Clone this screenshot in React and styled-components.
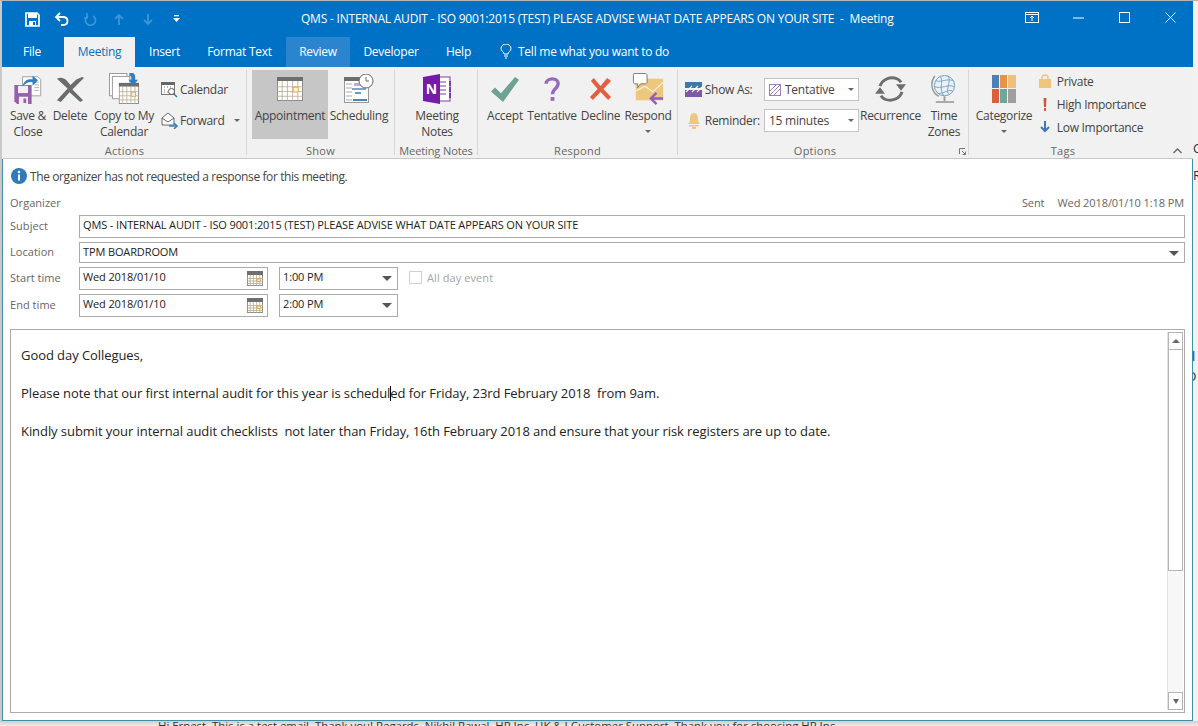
import React from 'react';
import styled, { createGlobalStyle } from 'styled-components';

const Global = createGlobalStyle`
  html, body { margin: 0; padding: 0; background: #dcdcdc; overflow: hidden; }
  body { width: 1198px; height: 726px; font-family: "Open Sans", "Noto Sans", sans-serif; }
`;

const Page = styled.div`
  width: 1198px; height: 726px; display: grid; grid-template-columns: 2px 1191px 5px; grid-template-rows: 1px 720px 5px;
  background: #e6e6e6; overflow: hidden;
`;
const TopEdge = styled.div`grid-column: 1 / 4; background: #b4b4b4;`;
const LeftEdge = styled.div`background: #c9c9c9;`;
const RightEdge = styled.div`
  background: #f2f2f2; display: flex; flex-direction: column; overflow: hidden; font-size: 13px; line-height: 16px; color: #333;
`;
const EdgeText = styled.span`margin-top: ${p => p.$mt}px; height: 16px; flex: none; text-indent: ${p => p.$indent || 0}px; white-space: nowrap;`;
const BottomEdge = styled.div`
  grid-column: 1 / 4; background: linear-gradient(#cfcfcf, #ededed); padding-left: 158px;
  font-size: 11.4px; line-height: 9px; color: #333; white-space: nowrap; overflow: hidden;
`;
const Window = styled.div`display: flex; flex-direction: column; background: #fff; min-height: 0; overflow: hidden;`;

const TitleBar = styled.div`
  height: 36px; background: #0072c6; display: flex; align-items: center; color: #fff; flex: none;
`;
const Qat = styled.div`display: flex; align-items: center; padding-left: 19px; width: 280px; flex: none;`;
const QatSlot = styled.span`width: ${p => p.$w}px; display: flex; justify-content: center; flex: none;`;
const TitleText = styled.div`font-size: 12px; white-space: pre; flex: none; width: 640px; letter-spacing: -.21px; padding-bottom: 2px;`;
const WinBtns = styled.div`display: flex; align-items: center; margin-left: auto; margin-top: -3px;`;
const WinSlot = styled.span`width: 46px; display: flex; justify-content: center; flex: none;`;

const Tabs = styled.div`height: 30px; background: #0072c6; display: flex; flex: none; align-items: stretch;`;
const Tab = styled.div`
  flex: none; box-sizing: border-box; width: ${p => p.$w}px; margin-left: ${p => p.$ml || 0}px; display: flex; align-items: center; justify-content: center; padding-bottom: 2px;
  font-size: 12px; letter-spacing: -.25px; color: ${p => p.$active ? '#106ebe' : '#fff'};
  background: ${p => p.$active ? '#f1f1f1' : p.$hover ? '#2a84cf' : 'transparent'};
`;
const TellMe = styled(Tab)`justify-content: flex-start; gap: 6px; width: 200px;`;

const Ribbon = styled.div`
  height: 92px; flex: none; background: #f1f1f1; border-bottom: 1px solid #c8c8c8; box-sizing: border-box; display: flex;
  border-left: 1px solid #f1f1f1; padding-top: 3px;
`;
const Group = styled.div`
  width: ${p => p.$w}px; flex: none; box-sizing: border-box; display: flex; flex-direction: column; position: relative;
  border-right: ${p => p.$last ? '0' : '1px solid #d6d6d6'}; margin-bottom: 3px;
`;
const GroupBody = styled.div`flex: 1; display: flex; padding-left: ${p => p.$pl || 0}px; min-height: 0;`;
const GroupLabel = styled.div`
  height: 10px; line-height: 12px; text-align: center; font-size: 11px; color: #666; white-space: nowrap; flex: none;
  letter-spacing: ${p => p.$tight ? '-.1px' : '.25px'}; padding-right: ${p => p.$pr || 0}px;
`;
const Launcher = styled.span`position: absolute; right: 2px; bottom: 0; display: flex;`;

const Big = styled.div`
  width: ${p => p.$w}px; margin-left: ${p => p.$ml || 0}px; flex: none; display: flex; flex-direction: column; align-items: center;
  height: 69px; box-sizing: border-box; background: ${p => p.$on ? '#c6c6c6' : 'transparent'};
`;
const BigIcon = styled.div`height: 38px; display: flex; align-items: center; justify-content: center; flex: none;`;
const BigLabel = styled.div`
  font-size: 12px; line-height: 16px; color: #444; text-align: center; white-space: pre; letter-spacing: -.27px;
`;
const Drop = styled.span`
  display: block; width: 0; height: 0; border: 3px solid transparent; border-top: 3px solid #666; border-bottom: 0; margin: ${p => p.$m || '6px auto 0'};
`;

const SmallCol = styled.div`display: flex; flex-direction: column; margin-left: ${p => p.$ml}px; padding-top: ${p => p.$pt}px; gap: ${p => p.$gap}px; flex: none;`;
const SmallRow = styled.div`
  display: flex; align-items: center; height: ${p => p.$h || 20}px; font-size: 12px; color: #444; white-space: nowrap; letter-spacing: -.3px;
`;
const SmallIcon = styled.span`width: ${p => p.$w}px; flex: none; display: flex; justify-content: center;`;
const OptLabel = styled.span`width: ${p => p.$w}px; flex: none;`;
const RibbonSelect = styled.div`
  width: 95px; height: 23px; box-sizing: border-box; border: 1px solid #c4c4c4; background: #fff; display: flex; align-items: center; gap: 4px;
  padding: 0 4px; font-size: 12px; color: #444; letter-spacing: -.25px; flex: none;
`;
const Caret = styled.span`margin-left: auto; width: 0; height: 0; border: 3px solid transparent; border-top: 3px solid #666; border-bottom: 0;`;
const Collapse = styled.div`flex: 1; display: flex; align-items: flex-end; justify-content: center; padding: 0 0 4px 4px;`;

const Form = styled.div`
  flex: 1; min-height: 0; display: flex; flex-direction: column; padding: 0 8px 8px 8px; background: #fff;
  box-shadow: inset 1px 0 #3f8fa8, inset -1px 0 #3f8fa8, inset 0 -1px #3f8fa8;
`;
const Info = styled.div`height: 34px; flex: none; display: flex; align-items: center; gap: 3px; font-size: 12px; color: #444; letter-spacing: -.4px; padding-left: 1px;`;
const Row = styled.div`display: flex; align-items: center; height: ${p => p.$h}px; margin-top: ${p => p.$mt || 0}px; flex: none; font-size: 11px; color: #666;`;
const FieldLabel = styled.div`width: 69px; flex: none; letter-spacing: .04px; padding-bottom: 2px;`;
const Sent = styled.div`margin-left: auto; display: flex; gap: 13px; padding: 0 1px 2px 0; letter-spacing: -.08px; white-space: nowrap;`;
const Field = styled.div`
  flex: ${p => p.$w ? 'none' : 1}; width: ${p => p.$w ? p.$w + 'px' : 'auto'}; margin-left: ${p => p.$ml || 0}px; height: 100%; box-sizing: border-box;
  border: 1px solid #ababab; background: #fff; display: flex; align-items: center; padding: 0 4px ${p => p.$pb ?? 5}px 3px; color: #222; font-size: 11px; letter-spacing: -.12px; white-space: nowrap;
`;
const Tri = styled.span`
  margin-left: auto; margin-top: 5px; width: 0; height: 0; border: 5px solid transparent; border-top: 5px solid #555; border-bottom: 0; margin-right: 1px;
`;
const Check = styled.span`width: 11px; height: 11px; border: 1px solid #d0d0d0; margin: 0 5px 2px 11px; flex: none;`;
const Disabled = styled.span`color: #a5a5a5; letter-spacing: .08px; padding-bottom: 2px;`;
const CalSlot = styled.span`margin-left: auto; display: flex; margin-top: 5px;`;

const BodyBox = styled.div`
  flex: 1; min-height: 0; margin-top: 12px; border: 1px solid #ababab; display: flex; box-sizing: border-box; width: 1175px;
`;
const BodyText = styled.div`flex: 1; padding: 16px 10px; font-size: 13px; line-height: 19px; color: #222; letter-spacing: -.067px;`;
const Para = styled.p`margin: 0 0 19px; white-space: pre;`;
const Cursor = styled.span`display: inline-block; width: 1px; height: 15px; background: #000; vertical-align: -3px; margin-right: -1px;`;
const Scrollbar = styled.div`
  width: 16px; flex: none; margin: 2px 1px 2px 0; box-sizing: border-box; display: flex; flex-direction: column; border-left: 1px solid #e2e2e2;
`;
const ScrollBtn = styled.div`height: 16px; flex: none; border: 1px solid #b5b5b5; background: #fff; display: flex; align-items: center; justify-content: center;`;
const Thumb = styled.div`height: 220px; flex: none; border: 1px solid #b5b5b5; border-top: 0; background: #fff;`;
const Track = styled.div`flex: 1; background: #f7f7f7;`;
const ArrowUp = styled.span`width: 0; height: 0; border: 4px solid transparent; border-bottom: 4px solid #666; border-top: 0;`;
const ArrowDown = styled.span`width: 0; height: 0; border: 3px solid transparent; border-top: 5px solid #666; border-bottom: 0;`;

const CalGrid = ({ w = 32, h = 28, hot = true }) => {
  const cw = w / 5, rows = 4, rh = (h - 5) / rows;
  return (
    <svg width={w} height={h} viewBox={`0 0 ${w} ${h}`}>
      <rect x=".5" y=".5" width={w - 1} height={h - 1} fill="#fff" stroke="#8c8c8c" />
      <rect x="0" y="0" width={w} height="4" fill="#6e6e6e" />
      {[1, 2, 3, 4].map(i => <line key={i} x1={i * cw} x2={i * cw} y1="4" y2={h} stroke="#b5a88f" strokeWidth=".8" />)}
      {[1, 2, 3].map(i => <line key={i} y1={5 + i * rh} y2={5 + i * rh} x1="0" x2={w} stroke="#b5a88f" strokeWidth=".8" />)}
      {hot && <rect x={3 * cw + .5} y={5 + rh + .5} width={cw} height={rh} fill="#fff4dc" stroke="#e5a94e" />}
    </svg>
  );
};

const SaveClose = () => (
  <svg width="28" height="30" viewBox="0 0 30 33">
    <path d="M9 3h17l3 3v18H9z" fill="#fff" stroke="#9a9a9a" />
    <path d="M22 9h5M22 12h5M22 15h5M22 18h5" stroke="#a7a7a7" />
    <path d="M0 12h19v21H3l-3-3z" fill="#9660ad" />
    <rect x="4" y="13" width="11" height="8" fill="#f3eef6" />
    <rect x="5" y="25" width="10" height="8" fill="#f3eef6" /><rect x="10" y="27" width="3" height="5" fill="#9660ad" />
    <path d="M9 14c1-6 5-9 11-8V2l6 5-6 6V9c-4-1-8 1-11 5z" fill="#2f7fc1" />
  </svg>
);
const DeleteIcon = () => (
  <svg width="29" height="27" viewBox="0 0 30 30" preserveAspectRatio="none">
    <path d="M1 3c4-2 7-1 10 2l4 5 6-6 6-3 2 1-12 13 11 12-3 2-11-11-9 11-4-2 11-13z" fill="#6b6b6b" />
  </svg>
);
const CopyIcon = () => (
  <svg width="31" height="32" viewBox="0 0 32 33">
    <rect x=".5" y=".5" width="18" height="23" fill="#fff" stroke="#9a9a9a" />
    <rect x="3.500" y="3.500" width="18" height="23" fill="#fff" stroke="#9a9a9a" />
    <g transform="translate(10 10)"><CalGrid w={21} h={22} /></g>
    <path d="M21 0h3c2 0 3 2 3 4v3h3l-5 6-5-6h3V4c0-1-1-1-2-1z" fill="#2f7fc1" />
  </svg>
);
const CalSmall = () => (
  <svg width="18" height="18" viewBox="0 0 18 18">
    <rect x=".5" y="2.500" width="13" height="12" fill="#fff" stroke="#777" />
    <rect y="2" width="14" height="3" fill="#666" />
    <path d="M3 7h1M6 7h1M9 7h1M3 10h1M3 12h1M6 12h1" stroke="#777" />
    <circle cx="10.500" cy="11.500" r="3" fill="#fff" stroke="#555" /><path d="M13 14l3 3" stroke="#2f7fc1" strokeWidth="1.500" />
  </svg>
);
const ForwardIcon = () => (
  <svg width="18" height="18" viewBox="0 0 18 18" fill="none">
    <path d="M1 7l6-5 6 5v7H1z" fill="#fff" stroke="#666" /><path d="M1 7l6 4 6-4" stroke="#666" />
    <path d="M8 15h7" stroke="#2f7fc1" strokeWidth="1.500" /><path d="M13 12l3 3-3 3" stroke="#2f7fc1" strokeWidth="1.500" />
  </svg>
);
const Scheduling = () => (
  <svg width="30" height="30" viewBox="0 0 30 30">
    <rect x=".5" y="3.500" width="24" height="25" fill="#fff" stroke="#999" />
    <rect y="3" width="25" height="4" fill="#6e6e6e" />
    <path d="M2 10h6M2 14h6M2 18h6M2 22h6M2 26h6" stroke="#a9a9a9" />
    <rect x="10" y="9" width="8" height="3" fill="#c9a7d9" /><rect x="8" y="14" width="14" height="2" fill="#7fa6c8" />
    <rect x="11" y="18" width="6" height="2" fill="#6d9ac0" /><rect x="9" y="25" width="14" height="2" fill="#4c86b0" />
    <circle cx="22" cy="7" r="7" fill="#fff" stroke="#666" /><path d="M22 3v4h3" fill="none" stroke="#666" />
  </svg>
);
const OneNote = () => (
  <svg width="30" height="30" viewBox="0 0 30 30">
    <rect x="13" y="3" width="15" height="24" fill="#fff" stroke="#7b3fa0" />
    <path d="M17 8h7M17 12h7M17 16h7M17 20h7" stroke="#7b3fa0" />
    <path d="M27 7h2v5h-2zM27 13h2v5h-2zM27 19h2v5h-2z" fill="#7b3fa0" />
    <path d="M1 3l17-3v30L1 27z" fill="#7719aa" />
    <text x="9.500" y="20" fill="#fff" fontSize="14" fontWeight="700" textAnchor="middle" fontFamily="Open Sans">N</text>
  </svg>
);
const Accept = () => <svg width="30" height="27" viewBox="0 0 30 28" preserveAspectRatio="none"><path d="M1 16l4-4 6 6L25 1l4 3-16 23z" fill="#6fa295" /></svg>;
const Tentative = () => (
  <svg width="17" height="25" viewBox="0 0 18 26" fill="none">
    <path d="M2 7c1-7 13-7 13 0 0 5-6 5-6 11" stroke="#9569bd" strokeWidth="3.600" /><rect x="7" y="21" width="4" height="4" fill="#9569bd" />
  </svg>
);
const Decline = () => <svg width="23" height="24" viewBox="0 0 24 24" preserveAspectRatio="none"><path d="M2 4l3-3 7 8 7-8 4 3-8 8 8 8-3 3-8-8-8 8-3-3 8-8z" fill="#e2603f" /></svg>;
const Respond = () => (
  <svg width="33" height="33" viewBox="0 0 33 35">
    <path d="M3 6h29v23H3z" fill="#edc77e" /><path d="M3 19l10-5 8 6 11-10" fill="none" stroke="#fff5df" strokeWidth="1.200" />
    <path d="M1 .5h12c1 0 2 1 2 2v7c0 1-1 2-2 2H8l-3 4v-4H2c-1 0-1.500-1-1.500-2v-7c0-1 .5-2 1-2z" fill="#fff" stroke="#777" />
    <path d="M32 27H20M25 21l-6 6 6 6" stroke="#9060b8" strokeWidth="2.500" fill="none" />
  </svg>
);
const ShowAs = () => (
  <svg width="17" height="15" viewBox="0 0 17 15">
    <rect width="17" height="6" fill="#3d78ad" /><rect y="8" width="17" height="7" fill="#7e57a8" />
    <path d="M1 10l6-6M7 10l6-6M12 10l5-5" stroke="#fff" strokeWidth="1.200" />
  </svg>
);
const Bell = () => (
  <svg width="14" height="16" viewBox="0 0 14 16"><path d="M7 0c3 0 4 3 4 6s1 4 2 5H1c1-1 2-2 2-5s1-6 4-6z" fill="#efc77c" /><rect x="2" y="12" width="10" height="1.500" fill="#efc77c" /><rect x="5" y="14" width="4" height="2" fill="#efc77c" /></svg>
);
const Hatch = () => (
  <svg width="12" height="12" viewBox="0 0 12 12"><rect x=".5" y=".5" width="11" height="11" fill="#fff" stroke="#9a80bd" /><path d="M1 7l6-6M1 11l10-10M5 11l6-6" stroke="#9a80bd" /></svg>
);
const Recurrence = () => (
  <svg width="32" height="28" viewBox="0 0 32 30" preserveAspectRatio="none" fill="none">
    <path d="M5 12C7 5 15 1 22 4c2 1 3 2 4 4" stroke="#6e6e6e" strokeWidth="3" />
    <path d="M27 18c-2 7-10 11-17 8-2-1-3-2-4-4" stroke="#6e6e6e" strokeWidth="3" />
    <path d="M21 10h10l-5 7z" fill="#6e6e6e" /><path d="M0 20h10l-5-7z" fill="#6e6e6e" />
  </svg>
);
const Globe = () => (
  <svg width="27" height="32" viewBox="0 0 28 33" fill="none">
    <circle cx="14" cy="13" r="10.500" fill="#eaf2f8" stroke="#6f9cbc" />
    <path d="M5 8c6 2 12-3 18 0M4 14c6 3 14-3 20 0M7 21c5 1 10-4 15-3M10 4c3 6-2 12 3 19M18 3c3 7-3 13 0 19" stroke="#7aa5c2" />
    <path d="M4 3C-1 9 0 20 8 24" stroke="#9a9a9a" strokeWidth="1.500" />
    <path d="M14 24v5" stroke="#9a9a9a" strokeWidth="2" /><rect x="5" y="29" width="19" height="2" fill="#a9a9a9" />
  </svg>
);
const Categorize = () => (
  <svg width="24" height="28" viewBox="0 0 24 28">
    <rect width="7" height="13" fill="#4d82b8" /><rect x="8" width="7" height="13" fill="#e8934a" /><rect x="16" width="8" height="13" fill="#efc07a" />
    <rect y="14" width="7" height="14" fill="#dc5f3b" /><rect x="8" y="14" width="7" height="14" fill="#72a699" /><rect x="16" y="14" width="8" height="14" fill="#9f9f9f" />
  </svg>
);
const Lock = () => (
  <svg width="12" height="14" viewBox="0 0 12 14"><path d="M3 6V4c0-4 6-4 6 0v2" fill="none" stroke="#efc77c" strokeWidth="1.500" /><rect y="5" width="12" height="9" fill="#efc77c" /></svg>
);
const Bang = () => <svg width="4" height="13" viewBox="0 0 4 13"><path d="M.5 0h3L3 9H1z" fill="#d9533c" /><rect x="1" y="10" width="2" height="3" fill="#d9533c" /></svg>;
const Down = () => <svg width="10" height="12" viewBox="0 0 10 12" fill="none"><path d="M5 0v10M1 6l4 4 4-4" stroke="#3f78b5" strokeWidth="2" /></svg>;
const InfoIcon = () => (
  <svg width="16" height="16" viewBox="0 0 16 16"><circle cx="8" cy="8" r="8" fill="#2f7ab8" /><circle cx="8" cy="4" r="1.300" fill="#fff" /><rect x="7" y="6.500" width="2" height="6" fill="#fff" /></svg>
);

const FloppyW = () => (
  <svg width="15" height="15" viewBox="0 0 15 15" fill="none">
    <path d="M1 1h11l2 2v11H1z" stroke="#fff" strokeWidth="1.700" /><rect x="3" y="1" width="9" height="5" fill="#fff" /><rect x="4" y="9" width="7" height="5" fill="#fff" /><rect x="8" y="10" width="2" height="3" fill="#0072c6" />
  </svg>
);
const UndoW = () => <svg width="15" height="14" viewBox="0 0 15 14" fill="none"><path d="M6 1L2 5l4 4" stroke="#fff" strokeWidth="1.800" /><path d="M3 5h6c6 0 6 8 0 8H7" stroke="#fff" strokeWidth="1.800" /></svg>;
const RedoDim = () => <svg width="13" height="13" viewBox="0 0 13 13" fill="none"><path d="M4 3a5 5 0 1 0 5 0" stroke="#3d95d6" strokeWidth="1.700" /><path d="M3 0v5h-3" stroke="#3d95d6" strokeWidth="1.500" /></svg>;
const UpDim = ({ down }) => (
  <svg width="10" height="11" viewBox="0 0 10 11" fill="none"><path d={down ? 'M5 0v9M1 6l4 4 4-4' : 'M5 11V2M1 5l4-4 4 4'} stroke="#3d95d6" strokeWidth="1.800" /></svg>
);
const QatMore = () => <svg width="7" height="8" viewBox="0 0 7 8"><rect x="1" width="5" height="1.300" fill="#fff" /><path d="M0 3h7L3.500 7z" fill="#fff" /></svg>;
const Bulb = () => <svg width="12" height="15" viewBox="0 0 12 15" fill="none"><path d="M4 10c0-2-3-3-3-5.500a5 4.500 0 0 1 10 0C11 7 8 8 8 10z" stroke="#fff" /><path d="M4 12h4M5 14h2" stroke="#fff" /></svg>;
const WinRestoreRibbon = () => <svg width="14" height="11" viewBox="0 0 14 11" fill="none"><rect x=".5" y=".5" width="13" height="10" stroke="#fff" /><path d="M0 2.500h14M7 9V4M5 6l2-2 2 2" stroke="#fff" /></svg>;
const WinMin = () => <svg width="11" height="2" viewBox="0 0 11 2"><path d="M0 1h11" stroke="#fff" /></svg>;
const WinMax = () => <svg width="11" height="11" viewBox="0 0 11 11"><rect x=".5" y=".5" width="10" height="10" fill="none" stroke="#fff" /></svg>;
const WinClose = () => <svg width="11" height="11" viewBox="0 0 11 11"><path d="M.5.5l10 10M10.500.5l-10 10" stroke="#fff" /></svg>;
const LauncherIcon = () => <svg width="7" height="7" viewBox="0 0 7 7" fill="none"><path d="M.5 6V.5H6" stroke="#777" /><path d="M3 3l3.500 3.500M6.500 3.500v3h-3" stroke="#777" /></svg>;
const Chevron = () => <svg width="9" height="6" viewBox="0 0 9 6" fill="none"><path d="M.5 5l4-4 4 4" stroke="#666" strokeWidth="1.300" /></svg>;

export default function App() {
  return (
    <Page>
      <Global />
      <TopEdge />
      <LeftEdge />
      <Window>
        <TitleBar>
          <Qat>
            <QatSlot $w={22}><FloppyW /></QatSlot>
            <QatSlot $w={36}><UndoW /></QatSlot>
            <QatSlot $w={22}><RedoDim /></QatSlot>
            <QatSlot $w={36}><UpDim /></QatSlot>
            <QatSlot $w={22}><UpDim down /></QatSlot>
            <QatSlot $w={35}><QatMore /></QatSlot>
          </Qat>
          <TitleText>QMS - INTERNAL AUDIT - ISO 9001:2015 (TEST) PLEASE ADVISE WHAT DATE APPEARS ON YOUR SITE  -  Meeting</TitleText>
          <WinBtns>
            <WinSlot><WinRestoreRibbon /></WinSlot>
            <WinSlot><WinMin /></WinSlot>
            <WinSlot><WinMax /></WinSlot>
            <WinSlot><WinClose /></WinSlot>
          </WinBtns>
        </TitleBar>
        <Tabs>
          <Tab $w={60}>File</Tab>
          <Tab $w={71} $ml={2} $active>Meeting</Tab>
          <Tab $w={59}>Insert</Tab>
          <Tab $w={91}>Format Text</Tab>
          <Tab $w={64} $ml={1} $hover>Review</Tab>
          <Tab $w={82}>Developer</Tab>
          <Tab $w={51} $ml={1}>Help</Tab>
          <TellMe $ml={16}><Bulb />Tell me what you want to do</TellMe>
        </Tabs>
        <Ribbon>
          <Group $w={244}>
            <GroupBody $pl={5}>
              <Big $w={40}><BigIcon><SaveClose /></BigIcon><BigLabel>{'Save &\nClose'}</BigLabel></Big>
              <Big $w={36} $ml={4}><BigIcon><DeleteIcon /></BigIcon><BigLabel>Delete</BigLabel></Big>
              <Big $w={64} $ml={4}><BigIcon><CopyIcon /></BigIcon><BigLabel>{'Copy to My\nCalendar'}</BigLabel></Big>
              <SmallCol $ml={4} $pt={9} $gap={11}>
                <SmallRow><SmallIcon $w={20}><CalSmall /></SmallIcon>Calendar</SmallRow>
                <SmallRow><SmallIcon $w={20}><ForwardIcon /></SmallIcon>Forward<Drop $m="0 0 0 10px" /></SmallRow>
              </SmallCol>
            </GroupBody>
            <GroupLabel>Actions</GroupLabel>
          </Group>
          <Group $w={148}>
            <GroupBody $pl={5}>
              <Big $w={76} $on><BigIcon><CalGrid w={26} h={24} /></BigIcon><BigLabel>Appointment</BigLabel></Big>
              <Big $w={62}><BigIcon><Scheduling /></BigIcon><BigLabel>Scheduling</BigLabel></Big>
            </GroupBody>
            <GroupLabel>Show</GroupLabel>
          </Group>
          <Group $w={83}>
            <GroupBody $pl={4}>
              <Big $w={76}><BigIcon><OneNote /></BigIcon><BigLabel>{'Meeting\nNotes'}</BigLabel></Big>
            </GroupBody>
            <GroupLabel $tight>Meeting Notes</GroupLabel>
          </Group>
          <Group $w={200}>
            <GroupBody $pl={6}>
              <Big $w={42}><BigIcon><Accept /></BigIcon><BigLabel>Accept</BigLabel></Big>
              <Big $w={52}><BigIcon><Tentative /></BigIcon><BigLabel>Tentative</BigLabel></Big>
              <Big $w={45}><BigIcon><Decline /></BigIcon><BigLabel>Decline</BigLabel></Big>
              <Big $w={50}><BigIcon><Respond /></BigIcon><BigLabel>Respond</BigLabel><Drop /></Big>
            </GroupBody>
            <GroupLabel>Respond</GroupLabel>
          </Group>
          <Group $w={291}>
            <GroupBody $pl={7}>
              <SmallCol $ml={0} $pt={8} $gap={8}>
                <SmallRow $h={23}><SmallIcon $w={17}><ShowAs /></SmallIcon><OptLabel $w={62}>&nbsp;Show As:</OptLabel><RibbonSelect><Hatch />Tentative<Caret /></RibbonSelect></SmallRow>
                <SmallRow $h={23}><SmallIcon $w={17}><Bell /></SmallIcon><OptLabel $w={62}>&nbsp;Reminder:</OptLabel><RibbonSelect>15 minutes<Caret /></RibbonSelect></SmallRow>
              </SmallCol>
              <Big $w={61} $ml={1}><BigIcon><Recurrence /></BigIcon><BigLabel>Recurrence</BigLabel></Big>
              <Big $w={46}><BigIcon><Globe /></BigIcon><BigLabel>{'Time\nZones'}</BigLabel></Big>
            </GroupBody>
            <GroupLabel $pr={16}>Options</GroupLabel>
            <Launcher><LauncherIcon /></Launcher>
          </Group>
          <Group $w={188} $last>
            <GroupBody $pl={6}>
              <Big $w={58}><BigIcon><Categorize /></BigIcon><BigLabel>Categorize</BigLabel><Drop /></Big>
              <SmallCol $ml={2} $pt={1} $gap={3}>
                <SmallRow><SmallIcon $w={19}><Lock /></SmallIcon>&nbsp;Private</SmallRow>
                <SmallRow><SmallIcon $w={19}><Bang /></SmallIcon>&nbsp;High Importance</SmallRow>
                <SmallRow><SmallIcon $w={19}><Down /></SmallIcon>&nbsp;Low Importance</SmallRow>
              </SmallCol>
            </GroupBody>
            <GroupLabel>Tags</GroupLabel>
          </Group>
          <Collapse><Chevron /></Collapse>
        </Ribbon>
        <Form>
          <Info><InfoIcon />The organizer has not requested a response for this meeting.</Info>
          <Row $h={14} $mt={3}>
            <FieldLabel>Organizer</FieldLabel>
            <Sent><span>Sent</span><span>Wed 2018/01/10 1:18 PM</span></Sent>
          </Row>
          <Row $h={23} $mt={5}>
            <FieldLabel>Subject</FieldLabel>
            <Field>QMS - INTERNAL AUDIT - ISO 9001:2015 (TEST) PLEASE ADVISE WHAT DATE APPEARS ON YOUR SITE</Field>
          </Row>
          <Row $h={21} $mt={4}>
            <FieldLabel>Location</FieldLabel>
            <Field $pb={3}>TPM BOARDROOM<Tri /></Field>
          </Row>
          <Row $h={23} $mt={4}>
            <FieldLabel>Start time</FieldLabel>
            <Field $w={189}>Wed 2018/01/10<CalSlot><CalGrid w={16} h={15} /></CalSlot></Field>
            <Field $w={119} $ml={11}>1:00 PM<Tri /></Field>
            <Check /><Disabled>All day event</Disabled>
          </Row>
          <Row $h={23} $mt={4}>
            <FieldLabel>End time</FieldLabel>
            <Field $w={189}>Wed 2018/01/10<CalSlot><CalGrid w={16} h={15} /></CalSlot></Field>
            <Field $w={119} $ml={11}>2:00 PM<Tri /></Field>
          </Row>
          <BodyBox>
            <BodyText>
              <Para>Good day Collegues,</Para>
              <Para>Please note that our first internal audit for this year is schedul<Cursor />ed for Friday, 23rd February 2018  from 9am.</Para>
              <Para>Kindly submit your internal audit checklists  not later than Friday, 16th February 2018 and ensure that your risk registers are up to date.</Para>
            </BodyText>
            <Scrollbar>
              <ScrollBtn><ArrowUp /></ScrollBtn>
              <Thumb />
              <Track />
              <ScrollBtn><ArrowDown /></ScrollBtn>
            </Scrollbar>
          </BodyBox>
        </Form>
      </Window>
      <RightEdge>
        <EdgeText $mt={139}>C</EdgeText>
        <EdgeText $mt={11}>R</EdgeText>
        <EdgeText $mt={165} $indent={-1}>l</EdgeText>
        <EdgeText $mt={4} $indent={-6}>D</EdgeText>
      </RightEdge>
      <BottomEdge>Hi Ernest, This is a test email. Thank you! Regards, Nikhil Rawal, HP Inc. UK &amp; I Customer Support. Thank you for choosing HP Inc.</BottomEdge>
    </Page>
  );
}
